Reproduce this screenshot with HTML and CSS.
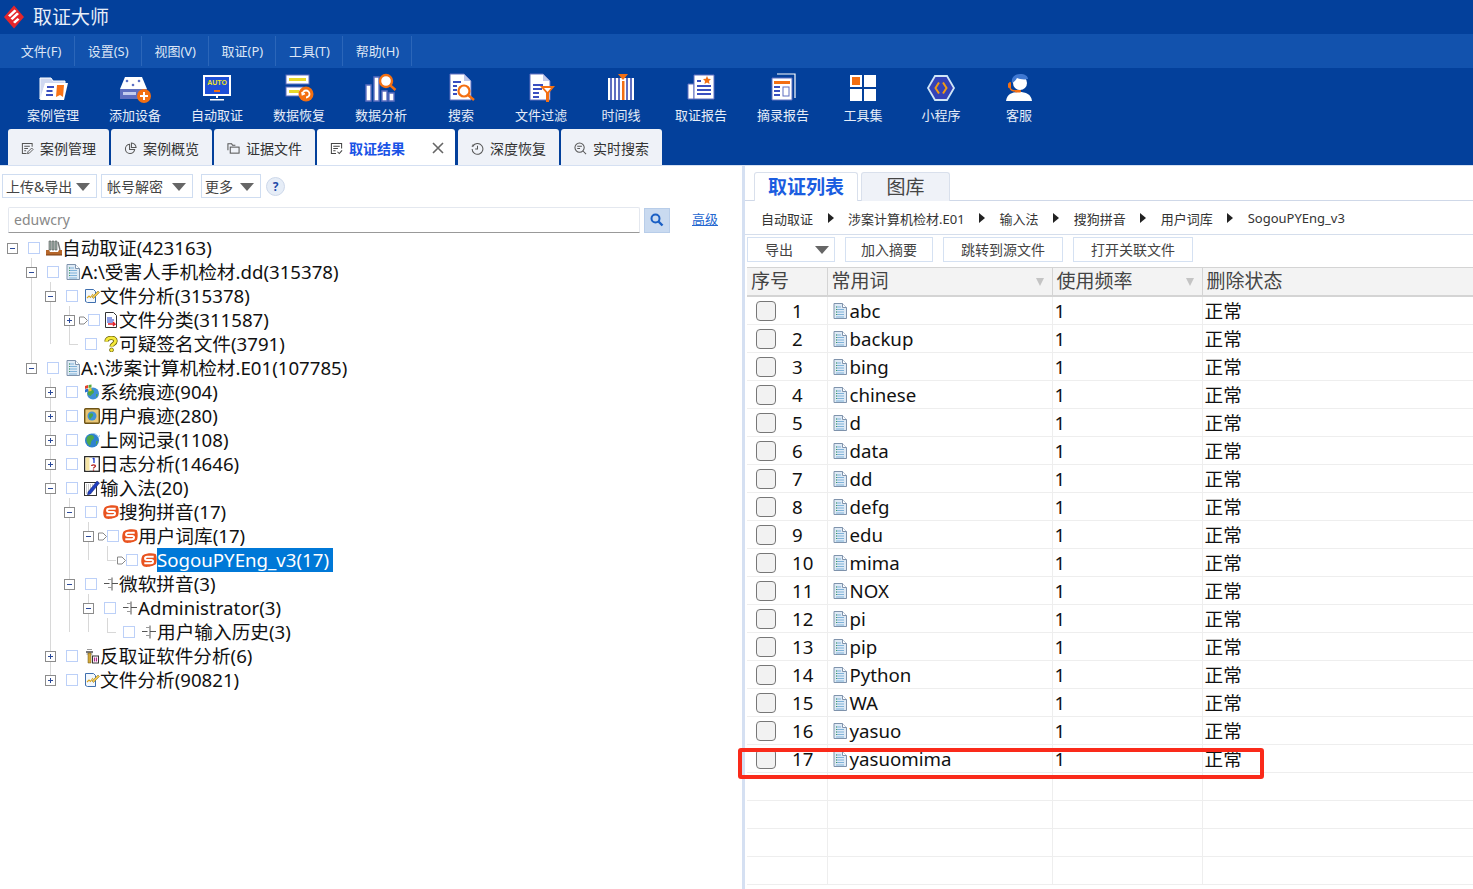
FILE: index.html
```html
<!DOCTYPE html>
<html lang="zh-CN">
<head>
<meta charset="utf-8">
<title>取证大师</title>
<link rel="stylesheet" href="styles.css">
</head>
<body>
<svg class="defs" width="0" height="0" aria-hidden="true">
  <defs>
    <symbol id="t-doc" viewBox="0 0 14 16"><path d="M1 .5h8.500l4 4v11H1z" fill="#dfeaf5" stroke="#7f93ac"/><path d="M9.500.5v4h4" fill="#fff" stroke="#7f93ac"/><path d="M3 4h5M3 6.500h8M3 9h8M3 11.500h8M3 14h8" stroke="#7fb2d9"/><path d="M3 4h1M3 6.500h1M3 9h1M3 11.500h1" stroke="#3f9a5a"/></symbol>
    <symbol id="t-box" viewBox="0 0 16 16"><path d="M3 1h2v9H3zM6 1h2v9H6zM9 1h2v9H9z" fill="#9fb0a8" stroke="#555" stroke-width=".6"/><path d="M12 2l2 8" stroke="#777" stroke-width="1.400"/><path d="M0 10h3l1 2h8l1-2h3v5H0z" fill="#b5662a"/><path d="M0 15h16" stroke="#7a3d12"/></symbol>
    <symbol id="t-analysis" viewBox="0 0 16 16"><path d="M1.500 1.500h8l2 2v11h-8l-2-1z" fill="#f3f8fd" stroke="#3f6fae"/><path d="M3 10l2-2 1.500 1.500L9 6" fill="none" stroke="#d9a520" stroke-width="1.100"/><path d="M8 9l6-6 1.500 1.500-6 6z" fill="#f2c64a" stroke="#7a6a20" stroke-width=".5"/></symbol>
    <symbol id="t-class" viewBox="0 0 16 16"><path d="M2.500.5h8l3 3v12h-11z" fill="#fff" stroke="#333"/><path d="M4 6h5M4 8h7M4 10h6" stroke="#1d3fd0" stroke-width="1.200"/><path d="M5 12h7l-2-2M12 12l-2 2" fill="none" stroke="#e2202a" stroke-width="1.300"/></symbol>
    <symbol id="t-q" viewBox="0 0 16 16"><path d="M3.500 5.500C3.500 1 12.500 .5 12.500 5c0 3-4 3-4 5.500" fill="none" stroke="#6d6410" stroke-width="4.400"/><path d="M3.500 5.500C3.500 1 12.500 .5 12.500 5c0 3-4 3-4 5.500" fill="none" stroke="#f6ea3a" stroke-width="2.800"/><circle cx="8.500" cy="14" r="2" fill="#f6ea3a" stroke="#6d6410" stroke-width=".8"/></symbol>
    <symbol id="t-sys" viewBox="0 0 16 16"><circle cx="9" cy="9.500" r="6" fill="#3f8fd6"/><path d="M6 6c2-1 4 0 4 2s-3 2-3 4l-3-1c-1-2 0-4 2-5zM12 10l2 .5-2 3z" fill="#4ca64a"/><path d="M1 2l3-1v3l-3 1z" fill="#e2402a"/><path d="M4.500 1l3-.5v3l-3 .5z" fill="#5aa83a"/><path d="M1 5.500l3-1v3l-3 1z" fill="#2a6fd0"/><path d="M4.500 4.500l3-.5v3l-3 .5z" fill="#f2c32a"/></symbol>
    <symbol id="t-user" viewBox="0 0 16 16"><rect x=".7" y=".7" width="14.600" height="14.600" rx="1" fill="#e8c676" stroke="#6d5316" stroke-width="1.400"/><circle cx="8" cy="8" r="4.500" fill="#3f92d8"/><path d="M5.500 6c2-1.500 4-.5 3.500 1.500S7 9 6.500 11C5 10 4.500 8 5.500 6z" fill="#4ba548"/></symbol>
    <symbol id="t-net" viewBox="0 0 16 16"><circle cx="8" cy="8.500" r="7" fill="#2e82cf"/><path d="M4 4c3-2 6-1 6 1.500S7 8 7 11l-1 3C3 12 1 7 4 4zM12 9l2 .5-2 4z" fill="#4fa84a"/><path d="M9 1.500c3 0 5 2 5.500 4L16 3" fill="none" stroke="#9cc9ee"/></symbol>
    <symbol id="t-log" viewBox="0 0 16 16"><rect x=".7" y=".7" width="14.600" height="14.600" fill="#fff" stroke="#222" stroke-width="1.300"/><path d="M1.500 1.500h4v13h-4z" fill="#f6e5a6"/><path d="M10 2v5M8.700 3l1.300-1" stroke="#1d3fd0" stroke-width="1.300" fill="none"/><path d="M7.500 10c0-1.500 4-1.500 4 0 0 1-2 1-2 2.500" stroke="#b32020" stroke-width="1.300" fill="none"/><path d="M9.500 13.500v1.200" stroke="#b32020" stroke-width="1.300"/></symbol>
    <symbol id="t-ime" viewBox="0 0 16 16"><rect x=".5" y="2.500" width="12" height="13" fill="#fff" stroke="#333"/><path d="M2 5h8M2 7h6M2 9h5M2 11h4M2 13h6" stroke="#999" stroke-dasharray="1 1"/><path d="M4 12l9-11 2.500 2-9 11-3 1z" fill="#1f3fbf" stroke="#10206a" stroke-width=".5"/></symbol>
    <symbol id="t-sogou" viewBox="0 0 17 16"><path d="M2 3C6 .5 12 .5 15.500 1.500c1.500 2 1.500 8 .5 10.500-2 2.500-9 4-13 3C1 14 0 11 .3 8 .5 6 1 4 2 3z" fill="#e9531f"/><path d="M13.500 4.500H6.500C3.500 4.500 3.500 8 6.500 8h4.500c2.500 0 2.500 3.500-.5 3.500H3.500" fill="none" stroke="#fff" stroke-width="2"/></symbol>
    <symbol id="t-split" viewBox="0 0 16 16"><path d="M1 7.500h5.500M9 7.500h6M9 1.500v13" fill="none" stroke="#555"/><path d="M5 3.500h4M5 11.500h4" stroke="#999"/></symbol>
    <symbol id="t-anti" viewBox="0 0 16 16"><path d="M2 3h7v2H2z" fill="#777"/><path d="M3 1.500h5M2.500 6h6" stroke="#999"/><path d="M4 5h3v10H4z" fill="#d3a93a" stroke="#6a5215" stroke-width=".5"/><rect x="8.500" y="8" width="6" height="7" fill="#fff" stroke="#333"/><path d="M10.500 9.500v4M12.500 9.500v4" stroke="#b12a8a" stroke-width="1.200"/></symbol>
    <symbol id="t-plus" viewBox="0 0 11 11"><rect x=".5" y=".5" width="10" height="10" fill="#fff" stroke="#8c8c8c"/><path d="M3 5.500h5M5.500 3v5" stroke="#2c4a9a"/></symbol>
    <symbol id="t-minus" viewBox="0 0 11 11"><rect x=".5" y=".5" width="10" height="10" fill="#fff" stroke="#8c8c8c"/><path d="M3 5.500h5" stroke="#2c4a9a"/></symbol>
    <symbol id="t-arrow" viewBox="0 0 9 9"><path d="M.5 1h4.500l3.500 3.500L5 8H.5z" fill="#fff" stroke="#888"/></symbol>
    <symbol id="t-search" viewBox="0 0 14 14"><circle cx="5.500" cy="5.500" r="4" fill="none" stroke="#1a5fc4" stroke-width="2"/><path d="M8.500 8.500l4 4" stroke="#1a5fc4" stroke-width="2.400"/></symbol>

    <symbol id="b-edit" viewBox="0 0 14 14"><path d="M12 5V1.500H1.500v11H6M3.500 4.500h6M3.500 7h4M3.500 9.500h2" fill="none" stroke="#555" stroke-width="1.100"/><path d="M7 12.500l.5-2 4-4 1.500 1.500-4 4z" fill="none" stroke="#555"/></symbol>
    <symbol id="b-pie" viewBox="0 0 14 14"><path d="M6 2.500a5 5 0 1 0 5.500 5.500H6z" fill="none" stroke="#555" stroke-width="1.100"/><path d="M8 1a5 5 0 0 1 5 5H8z" fill="none" stroke="#555" stroke-width="1.100"/></symbol>
    <symbol id="b-folder" viewBox="0 0 14 14"><path d="M1 9V2h4l1 1.500h3" fill="none" stroke="#555" stroke-width="1.100"/><rect x="3.500" y="5.500" width="9.500" height="6.500" fill="none" stroke="#555" stroke-width="1.100"/></symbol>
    <symbol id="b-result" viewBox="0 0 14 14"><path d="M6.500 12.500h-5v-11h11V7M3.500 4.500h7M3.500 7h5M3.500 9.500h2.500" fill="none" stroke="#444" stroke-width="1.100"/><path d="M8 10.500l2 2 3-3.500" fill="none" stroke="#444" stroke-width="1.100"/></symbol>
    <symbol id="b-clock" viewBox="0 0 14 14"><path d="M2 4.500a5.800 5.800 0 1 1-.8 3" fill="none" stroke="#555" stroke-width="1.100"/><path d="M7 4v3.500H4.500M.8 4.500l1.200 0 .3-2" fill="none" stroke="#555" stroke-width="1.100"/></symbol>
    <symbol id="b-find" viewBox="0 0 14 14"><circle cx="6" cy="6" r="5" fill="none" stroke="#555" stroke-width="1.100"/><path d="M9.700 9.700l3.300 3.300M3.500 4.500h5M3.500 7h3" stroke="#555" stroke-width="1.100"/></symbol>
  </defs>
</svg>

<header class="titlebar">
  <svg class="logo" viewBox="0 0 20 24" aria-hidden="true">
    <path d="M10 .5L20 12 10 23.500 0 12z" fill="#e5262b"/>
    <path d="M4 10.500l6.500-6 2 1.500-6.500 6zM6.500 13.500l6.500-6 2 1.500-6.500 6zM9 17l4.500-4 2 1.500-4.500 4z" fill="#fff"/>
  </svg>
  <span class="app-name">取证大师</span>
</header>

<nav class="menubar">
  <span class="menu-item">文件(F)</span>
  <span class="menu-item">设置(S)</span>
  <span class="menu-item">视图(V)</span>
  <span class="menu-item">取证(P)</span>
  <span class="menu-item">工具(T)</span>
  <span class="menu-item">帮助(H)</span>
</nav>

<section class="toolbar">
  <div class="tool">
    <svg class="tool-icon" viewBox="0 0 32 32" aria-hidden="true"><path d="M3 27V6h11l2 3h12v5H8z" fill="#cfd8f0" stroke="#fff"/><path d="M8 11h23l-4 17H3z" fill="#fff"/><path d="M10 15h7M9.500 19h6M9 23h7" stroke="#3a4fc0" stroke-width="2.200"/><path d="M20 13h7l-1 12-3-2-4 2z" fill="#f97316"/></svg>
    <span class="tool-label">案例管理</span>
  </div>
  <div class="tool">
    <svg class="tool-icon" viewBox="0 0 32 32" aria-hidden="true"><path d="M6 5h17l5 12H1z" fill="#fff"/><circle cx="8" cy="9" r="1.300" fill="#5b6fc4"/><circle cx="20" cy="9" r="1.300" fill="#5b6fc4"/><circle cx="14" cy="13" r="1.300" fill="#5b6fc4"/><rect x="1" y="17" width="27" height="10" fill="#5f6fc0"/><rect x="4" y="20" width="13" height="3" fill="#c5cdee"/><circle cx="25" cy="24" r="7" fill="#f36f12"/><path d="M21 24h8M25 20v8" stroke="#fff" stroke-width="2"/></svg>
    <span class="tool-label">添加设备</span>
  </div>
  <div class="tool">
    <svg class="tool-icon" viewBox="0 0 32 32" aria-hidden="true"><rect x="2" y="3" width="28" height="21" fill="#fff"/><rect x="4" y="5" width="24" height="17" fill="#1e4fd6"/><text class="auto-text" x="16" y="13">AUTO</text><rect x="13" y="18" width="6" height="2" fill="#f36f12"/><path d="M15 24h2v2h-2zM9 27h14v1.500H9z" fill="#fff"/></svg>
    <span class="tool-label">自动取证</span>
  </div>
  <div class="tool">
    <svg class="tool-icon" viewBox="0 0 32 32" aria-hidden="true"><rect x="3" y="3" width="23" height="9" fill="#fff" stroke="#5f6fc0"/><rect x="6" y="6" width="17" height="3" fill="#e8d92a"/><rect x="3" y="15" width="17" height="9" fill="#fff" stroke="#5f6fc0"/><rect x="6" y="18" width="10" height="3" fill="#e8d92a"/><circle cx="23" cy="22" r="7.500" fill="#f36f12"/><path d="M19.500 22a3.500 3.500 0 1 1 3.500 3.500M19 20l.500 2.500 2.500-1" fill="none" stroke="#fff" stroke-width="1.800"/></svg>
    <span class="tool-label">数据恢复</span>
  </div>
  <div class="tool">
    <svg class="tool-icon" viewBox="0 0 32 32" aria-hidden="true"><path d="M1 13h5v16H1zM9 5h5v24H9zM17 19h5v10h-5zM24 21h5v8h-5z" fill="#fff" stroke="#5f6fc0" stroke-width="1.400"/><circle cx="21" cy="9" r="6" fill="#fff" stroke="#f36f12" stroke-width="2.400"/><path d="M25.500 13.500l5 4.500" stroke="#f36f12" stroke-width="2.400"/></svg>
    <span class="tool-label">数据分析</span>
  </div>
  <div class="tool n">
    <svg class="tool-icon" viewBox="0 0 32 32" aria-hidden="true"><path d="M5 2h14l7 7v19H5z" fill="#fff" stroke="#5f6fc0"/><path d="M19 2l7 7h-7z" fill="#bfc7e8"/><path d="M8 10h8M8 14h4M8 18h4M8 22h4" stroke="#3a4fc0" stroke-width="1.800"/><circle cx="19" cy="19" r="5.500" fill="#fff" stroke="#f36f12" stroke-width="2.200"/><path d="M23 23l6 5" stroke="#f36f12" stroke-width="2.400"/></svg>
    <span class="tool-label">搜索</span>
  </div>
  <div class="tool">
    <svg class="tool-icon" viewBox="0 0 32 32" aria-hidden="true"><path d="M5 2h13l7 7v19H5z" fill="#fff" stroke="#5f6fc0"/><path d="M18 2l7 7h-7z" fill="#bfc7e8"/><path d="M8 13h10M8 17h9M8 21h6M8 25h6" stroke="#3a4fc0" stroke-width="1.800"/><path d="M15 14h15l-6 7v9h-3v-9z" fill="#f36f12"/><path d="M19 16h7l-3.500 4z" fill="#fff"/></svg>
    <span class="tool-label">文件过滤</span>
  </div>
  <div class="tool n">
    <svg class="tool-icon" viewBox="0 0 32 32" aria-hidden="true"><path d="M3 6h26v22H3z" fill="#fff"/><path d="M6 6v22M10 6v22M14 6v22M22 6v22M26 6v22" stroke="#5f6fc0" stroke-width="2"/><path d="M17 9h2.500v19H17z" fill="#f36f12"/><path d="M13 2h10l-5 6z" fill="#f36f12"/></svg>
    <span class="tool-label">时间线</span>
  </div>
  <div class="tool">
    <svg class="tool-icon" viewBox="0 0 32 32" aria-hidden="true"><path d="M3 12h6v15H3z" fill="#fff" stroke="#5f6fc0"/><path d="M9 3h20v24H9z" fill="#fff" stroke="#5f6fc0"/><path d="M12 9h4M12 14h14M12 18h14M12 22h14" stroke="#3a4fc0" stroke-width="1.800"/><path d="M22 4l1.200 2.700 2.800.3-2 2 .5 3-2.500-1.500-2.500 1.500.5-3-2-2 2.800-.3z" fill="#f36f12"/></svg>
    <span class="tool-label">取证报告</span>
  </div>
  <div class="tool">
    <svg class="tool-icon" viewBox="0 0 32 32" aria-hidden="true"><path d="M10 2h18v24" fill="none" stroke="#fff" stroke-width="1.200"/><path d="M5 6h20v22H5z" fill="#fff" stroke="#5f6fc0"/><rect x="7" y="9" width="16" height="3" fill="#f36f12"/><path d="M7 15h6M7 19h6M7 23h6" stroke="#3a4fc0" stroke-width="1.800"/><rect x="16" y="15" width="6" height="9" fill="#fff" stroke="#5f6fc0"/></svg>
    <span class="tool-label">摘录报告</span>
  </div>
  <div class="tool n">
    <svg class="tool-icon" viewBox="0 0 32 32" aria-hidden="true"><rect x="3" y="3" width="12" height="12" fill="#fff"/><rect x="5" y="5" width="8" height="8" fill="#f36f12"/><rect x="17" y="3" width="12" height="12" fill="#fff"/><rect x="3" y="17" width="12" height="12" fill="#fff"/><rect x="17" y="17" width="12" height="12" fill="#fff"/></svg>
    <span class="tool-label">工具集</span>
  </div>
  <div class="tool n">
    <svg class="tool-icon" viewBox="0 0 32 32" aria-hidden="true"><path d="M10 4h12l7 12-7 12H10L3 16z" fill="#3443b8" stroke="#cfe6f7" stroke-width="1.800"/><path d="M14 10.500l-3.500 5.500 3.500 5.500M18 10.500l3.500 5.500-3.500 5.500" fill="none" stroke="#f39a12" stroke-width="2"/></svg>
    <span class="tool-label">小程序</span>
  </div>
  <div class="tool n">
    <svg class="tool-icon" viewBox="0 0 32 32" aria-hidden="true"><path d="M3 29c1-7 6-9 13-9s12 2 13 9z" fill="#fff"/><circle cx="17" cy="11" r="7" fill="#fff"/><path d="M9 11c-1-6 3-9 8-9s8 2 8 5c-4 1-9 0-11-1-1 2-3 4-5 5z" fill="#3f78d2"/><path d="M7 10v5c0 3 3 4 6 4" fill="none" stroke="#f36f12" stroke-width="1.500"/><rect x="5" y="11" width="3" height="5" rx="1" fill="#f36f12"/><rect x="12" y="18" width="6" height="2.500" rx="1" fill="#f36f12"/></svg>
    <span class="tool-label">客服</span>
  </div>
</section>

<section class="tabs">
  <div class="tab"><svg class="tab-icon"><use href="#b-edit"/></svg>案例管理</div>
  <div class="tab"><svg class="tab-icon"><use href="#b-pie"/></svg>案例概览</div>
  <div class="tab"><svg class="tab-icon"><use href="#b-folder"/></svg>证据文件</div>
  <div class="tab active"><svg class="tab-icon"><use href="#b-result"/></svg><span class="tab-title">取证结果</span>
    <svg class="tab-close" viewBox="0 0 12 12" aria-hidden="true"><path d="M1 1l10 10M11 1L1 11" stroke="#666" stroke-width="1.600"/></svg>
  </div>
  <div class="tab"><svg class="tab-icon"><use href="#b-clock"/></svg>深度恢复</div>
  <div class="tab"><svg class="tab-icon"><use href="#b-find"/></svg>实时搜索</div>
</section>

<main class="workspace">
  <aside class="left">
    <div class="left-tools">
      <span class="btn b-upload">上传&amp;导出<i class="caret"></i></span>
      <span class="btn b-account">帐号解密<i class="caret"></i></span>
      <span class="btn b-more">更多<i class="caret"></i></span>
      <span class="help">?</span>
    </div>
    <div class="search-row">
      <div class="search-input">eduwcry</div>
      <span class="search-btn"><svg class="search-glyph"><use href="#t-search"/></svg></span>
      <a class="advanced">高级</a>
    </div>
    <div class="tree">
      <div class="row l0"><svg class="exp"><use href="#t-minus"/></svg><span class="gutter"></span><span class="cb"></span><svg class="ico"><use href="#t-box"/></svg><span class="label">自动取证(423163)</span></div>
      <div class="branch g1">
        <div class="row l1"><svg class="exp"><use href="#t-minus"/></svg><span class="gutter"></span><span class="cb"></span><svg class="ico"><use href="#t-doc"/></svg><span class="label">A:\受害人手机检材.dd(315378)</span></div>
        <div class="branch g2">
          <div class="row l2"><svg class="exp"><use href="#t-minus"/></svg><span class="gutter"></span><span class="cb"></span><svg class="ico"><use href="#t-analysis"/></svg><span class="label">文件分析(315378)</span></div>
          <div class="branch g3">
            <div class="row l3 arrowed"><svg class="exp"><use href="#t-plus"/></svg><span class="gutter"><svg class="arrow"><use href="#t-arrow"/></svg></span><span class="cb"></span><svg class="ico"><use href="#t-class"/></svg><span class="label">文件分类(311587)</span></div>
            <div class="row l3"><span class="elbow"></span><span class="gutter"></span><span class="cb"></span><svg class="ico"><use href="#t-q"/></svg><span class="label">可疑签名文件(3791)</span></div>
          </div>
        </div>
        <div class="row l1"><svg class="exp"><use href="#t-minus"/></svg><span class="gutter"></span><span class="cb"></span><svg class="ico"><use href="#t-doc"/></svg><span class="label">A:\涉案计算机检材.E01(107785)</span></div>
      </div>
      <div class="branch g2">
        <div class="row l2"><svg class="exp"><use href="#t-plus"/></svg><span class="gutter"></span><span class="cb"></span><svg class="ico"><use href="#t-sys"/></svg><span class="label">系统痕迹(904)</span></div>
        <div class="row l2"><svg class="exp"><use href="#t-plus"/></svg><span class="gutter"></span><span class="cb"></span><svg class="ico"><use href="#t-user"/></svg><span class="label">用户痕迹(280)</span></div>
        <div class="row l2"><svg class="exp"><use href="#t-plus"/></svg><span class="gutter"></span><span class="cb"></span><svg class="ico"><use href="#t-net"/></svg><span class="label">上网记录(1108)</span></div>
        <div class="row l2"><svg class="exp"><use href="#t-plus"/></svg><span class="gutter"></span><span class="cb"></span><svg class="ico"><use href="#t-log"/></svg><span class="label">日志分析(14646)</span></div>
        <div class="row l2"><svg class="exp"><use href="#t-minus"/></svg><span class="gutter"></span><span class="cb"></span><svg class="ico"><use href="#t-ime"/></svg><span class="label">输入法(20)</span></div>
        <div class="branch g3">
          <div class="row l3"><svg class="exp"><use href="#t-minus"/></svg><span class="gutter"></span><span class="cb"></span><svg class="ico"><use href="#t-sogou"/></svg><span class="label">搜狗拼音(17)</span></div>
          <div class="branch g4">
            <div class="row l4 arrowed"><svg class="exp"><use href="#t-minus"/></svg><span class="gutter"><svg class="arrow"><use href="#t-arrow"/></svg></span><span class="cb"></span><svg class="ico"><use href="#t-sogou"/></svg><span class="label">用户词库(17)</span></div>
            <div class="branch g5">
              <div class="row l5 arrowed"><span class="elbow"></span><span class="gutter"><svg class="arrow"><use href="#t-arrow"/></svg></span><span class="cb"></span><svg class="ico"><use href="#t-sogou"/></svg><span class="label selected">SogouPYEng_v3(17)</span></div>
            </div>
          </div>
          <div class="row l3"><svg class="exp"><use href="#t-minus"/></svg><span class="gutter"></span><span class="cb"></span><svg class="ico"><use href="#t-split"/></svg><span class="label">微软拼音(3)</span></div>
          <div class="branch g4">
            <div class="row l4"><svg class="exp"><use href="#t-minus"/></svg><span class="gutter"></span><span class="cb"></span><svg class="ico"><use href="#t-split"/></svg><span class="label">Administrator(3)</span></div>
            <div class="branch g5">
              <div class="row l5"><span class="elbow"></span><span class="gutter"></span><span class="cb"></span><svg class="ico"><use href="#t-split"/></svg><span class="label">用户输入历史(3)</span></div>
            </div>
          </div>
        </div>
        <div class="row l2"><svg class="exp"><use href="#t-plus"/></svg><span class="gutter"></span><span class="cb"></span><svg class="ico"><use href="#t-anti"/></svg><span class="label">反取证软件分析(6)</span></div>
        <div class="row l2"><svg class="exp"><use href="#t-plus"/></svg><span class="gutter"></span><span class="cb"></span><svg class="ico"><use href="#t-analysis"/></svg><span class="label">文件分析(90821)</span></div>
      </div>
    </div>
  </aside>

  <section class="right">
    <div class="subtabs">
      <span class="subtab on">取证列表</span>
      <span class="subtab off">图库</span>
    </div>
    <div class="crumbs">
      <span>自动取证</span><i class="crumb-sep"></i>
      <span>涉案计算机检材.E01</span><i class="crumb-sep"></i>
      <span>输入法</span><i class="crumb-sep"></i>
      <span>搜狗拼音</span><i class="crumb-sep"></i>
      <span>用户词库</span><i class="crumb-sep"></i>
      <span>SogouPYEng_v3</span>
    </div>
    <div class="actions">
      <span class="act a-export">导出<i class="caret"></i></span>
      <span class="act a-add">加入摘要</span>
      <span class="act a-jump">跳转到源文件</span>
      <span class="act a-open">打开关联文件</span>
    </div>
    <table class="grid">
      <colgroup><col class="c-no"><col class="c-word"><col class="c-freq"><col class="c-state"></colgroup>
      <thead>
        <tr><th>序号</th><th>常用词<i class="funnel"></i></th><th>使用频率<i class="funnel"></i></th><th>删除状态</th></tr>
      </thead>
      <tbody>
        <tr><td><span class="no"><i class="box"></i>1</span></td><td><span class="word"><svg class="fdoc"><use href="#t-doc"/></svg>abc</span></td><td>1</td><td>正常</td></tr>
        <tr><td><span class="no"><i class="box"></i>2</span></td><td><span class="word"><svg class="fdoc"><use href="#t-doc"/></svg>backup</span></td><td>1</td><td>正常</td></tr>
        <tr><td><span class="no"><i class="box"></i>3</span></td><td><span class="word"><svg class="fdoc"><use href="#t-doc"/></svg>bing</span></td><td>1</td><td>正常</td></tr>
        <tr><td><span class="no"><i class="box"></i>4</span></td><td><span class="word"><svg class="fdoc"><use href="#t-doc"/></svg>chinese</span></td><td>1</td><td>正常</td></tr>
        <tr><td><span class="no"><i class="box"></i>5</span></td><td><span class="word"><svg class="fdoc"><use href="#t-doc"/></svg>d</span></td><td>1</td><td>正常</td></tr>
        <tr><td><span class="no"><i class="box"></i>6</span></td><td><span class="word"><svg class="fdoc"><use href="#t-doc"/></svg>data</span></td><td>1</td><td>正常</td></tr>
        <tr><td><span class="no"><i class="box"></i>7</span></td><td><span class="word"><svg class="fdoc"><use href="#t-doc"/></svg>dd</span></td><td>1</td><td>正常</td></tr>
        <tr><td><span class="no"><i class="box"></i>8</span></td><td><span class="word"><svg class="fdoc"><use href="#t-doc"/></svg>defg</span></td><td>1</td><td>正常</td></tr>
        <tr><td><span class="no"><i class="box"></i>9</span></td><td><span class="word"><svg class="fdoc"><use href="#t-doc"/></svg>edu</span></td><td>1</td><td>正常</td></tr>
        <tr><td><span class="no"><i class="box"></i>10</span></td><td><span class="word"><svg class="fdoc"><use href="#t-doc"/></svg>mima</span></td><td>1</td><td>正常</td></tr>
        <tr><td><span class="no"><i class="box"></i>11</span></td><td><span class="word"><svg class="fdoc"><use href="#t-doc"/></svg>NOX</span></td><td>1</td><td>正常</td></tr>
        <tr><td><span class="no"><i class="box"></i>12</span></td><td><span class="word"><svg class="fdoc"><use href="#t-doc"/></svg>pi</span></td><td>1</td><td>正常</td></tr>
        <tr><td><span class="no"><i class="box"></i>13</span></td><td><span class="word"><svg class="fdoc"><use href="#t-doc"/></svg>pip</span></td><td>1</td><td>正常</td></tr>
        <tr><td><span class="no"><i class="box"></i>14</span></td><td><span class="word"><svg class="fdoc"><use href="#t-doc"/></svg>Python</span></td><td>1</td><td>正常</td></tr>
        <tr><td><span class="no"><i class="box"></i>15</span></td><td><span class="word"><svg class="fdoc"><use href="#t-doc"/></svg>WA</span></td><td>1</td><td>正常</td></tr>
        <tr><td><span class="no"><i class="box"></i>16</span></td><td><span class="word"><svg class="fdoc"><use href="#t-doc"/></svg>yasuo</span></td><td>1</td><td>正常</td></tr>
        <tr><td><span class="no"><i class="box"></i>17</span></td><td><span class="word"><svg class="fdoc"><use href="#t-doc"/></svg>yasuomima</span></td><td>1</td><td>正常</td></tr>
        <tr><td></td><td></td><td></td><td></td></tr>
        <tr><td></td><td></td><td></td><td></td></tr>
        <tr><td></td><td></td><td></td><td></td></tr>
        <tr><td></td><td></td><td></td><td></td></tr>
      </tbody>
    </table>
    <div class="annotation"></div>
  </section>
</main>
</body>
</html>
```

FILE: styles.css
```css
* { box-sizing: border-box; }
html, body { margin: 0; height: 889px; overflow: hidden; }
body {
  background: #fff;
  color: #111;
  font-family: "Noto Sans", "Noto Sans CJK SC", sans-serif;
  display: flex;
  flex-direction: column;
}
i { font-style: normal; }
.defs { position: absolute; }

/* title */
.titlebar { height: 34px; background: #03409b; display: flex; align-items: center; padding-left: 4px; flex: none; }
.logo { width: 20px; height: 24px; margin-right: 9px; }
.app-name { color: #e8eef8; font-size: 19px; line-height: 34px; }

/* menu */
.menubar { height: 34px; background: #1252ad; display: flex; padding: 2px 0 2px 8px; flex: none; }
.menu-item { width: 67.1px; text-align: center; color: #dde6f5; font-size: 13px; line-height: 30px; border-right: 1px solid #2b66b9; white-space: nowrap; }
.menu-item:last-child { width: 69px; }

/* ribbon */
.toolbar { height: 61px; background: #03409b; display: flex; padding: 4px 0 0 12px; flex: none; }
.tool { width: 82px; display: flex; flex-direction: column; align-items: center; }
.tool.n { width: 78px; }
.tool-icon { width: 32px; height: 32px; }
.tool-label { color: #e6edf8; font-size: 13px; line-height: 16px; margin-top: 3px; }
.auto-text { fill: #f2e41f; font-family: "Liberation Sans", sans-serif; font-size: 7px; font-weight: 700; text-anchor: middle; }

/* tabs */
.tabs { height: 37px; background: #03409b; display: flex; gap: 2px; padding-left: 8px; border-bottom: 1px solid #d5e0f2; flex: none; }
.tab {
  width: 101px; height: 36px; background: #eff2f8; color: #333; font-size: 14px;
  display: flex; align-items: center; padding: 2px 0 0 13px; border-radius: 3px 3px 0 0;
}
.tab-icon { width: 13px; height: 13px; margin-right: 6px; flex: none; }
.tab.active { width: 138px; background: #fff; margin-right: 1px; position: relative; }
.tab-title { color: #1a53e6; font-weight: 700; }
.tab-close { width: 12px; height: 12px; margin-left: 27px; }

/* workspace */
.workspace { flex: 1; display: flex; min-height: 0; }
.left { width: 742px; flex: none; }
.right { flex: 1; border-left: 3px solid #d5e0f2; position: relative; min-width: 0; }

.left-tools { display: flex; align-items: center; height: 24px; margin: 8px 0 0 2px; }
.btn {
  height: 24px; border: 1px solid #cfddf1; color: #444; font-size: 14px; line-height: 22px;
  padding: 1px 6px 0 3px; display: flex; align-items: center; justify-content: space-between;
}
.b-upload { width: 95px; margin-right: 4px; }
.b-account { width: 92px; margin-right: 8px; padding-left: 5px; }
.b-more { width: 60px; margin-right: 5px; }
.caret { width: 0; height: 0; border-left: 7px solid transparent; border-right: 7px solid transparent; border-top: 8px solid #666; display: block; }
.help {
  width: 19px; height: 19px; border-radius: 50%; background: #e6edf7; border: 1px solid #cdd8ea;
  color: #1f4aa8; font-size: 12px; font-weight: 700; line-height: 17px; text-align: center;
}

.search-row { display: flex; align-items: center; height: 26px; margin: 9px 0 0 8px; }
.search-input {
  width: 632px; height: 26px; border: 1px solid #e4e8ef; border-bottom: 1px solid #999;
  color: #888; font-size: 14px; line-height: 24px; padding-left: 5px; margin-right: 4px; border-radius: 2px 2px 0 0;
}
.search-btn { width: 26px; height: 25px; background: #c9daf0; border: 1px solid #b8cde9; display: flex; align-items: center; justify-content: center; }
.search-glyph { width: 14px; height: 14px; }
.advanced { color: #2467d0; font-size: 13px; line-height: 24px; height: 24px; text-decoration: underline; margin: -2px 0 0 22px; }

/* tree */
.tree { margin-top: 3px; }
.branch { position: relative; }
.branch::before { content: ""; position: absolute; top: -2px; bottom: 12px; width: 1px; background: #d8d8d8; }
.g1::before { left: 31px; }
.g2::before { left: 50px; }
.g3::before { left: 69px; }
.g4::before { left: 88px; }
.g5::before { left: 107px; }
.row { height: 24px; display: flex; align-items: center; position: relative; white-space: nowrap; }
.l0 { padding-left: 7px; }
.l1 { padding-left: 26px; }
.l2 { padding-left: 45px; }
.l3 { padding-left: 64px; }
.l4 { padding-left: 83px; }
.l5 { padding-left: 102px; }
.exp { width: 11px; height: 11px; flex: none; position: relative; margin-right: 4px; }
.elbow { width: 15px; height: 1px; flex: none; background: linear-gradient(to right, transparent 5px, #d8d8d8 5px, #d8d8d8 14px, transparent 14px); }
.gutter { width: 6px; flex: none; display: flex; }
.arrowed .gutter { width: 9px; }
.arrow { width: 9px; height: 9px; }
.cb { width: 12px; height: 12px; border: 1px solid #bcd0f8; background: #fff; flex: none; margin-right: 6px; }
.arrowed .cb { margin-right: 3px; }
.ico { width: 16px; height: 16px; flex: none; }
.label { font-size: 18.67px; line-height: 24px; color: #111; }
.selected { background: #0078d7; color: #fff; padding-right: 4px; }

/* right */
.subtabs { height: 35px; padding: 6px 0 0 9px; display: flex; gap: 3px; border-bottom: 1px solid #cfd8e8; }
.subtab { height: 29px; font-size: 19px; line-height: 29px; text-align: center; border: 1px solid #d9e0ec; border-bottom: 0; border-radius: 3px 3px 0 0; }
.subtab.on { width: 104px; color: #1b5de0; font-weight: 700; background: #fff; }
.subtab.off { width: 89px; color: #444; background: #eff2f8; }
.crumbs { height: 34px; display: flex; align-items: center; gap: 14.5px; padding: 1px 0 0 16px; color: #333; font-size: 13px; border-bottom: 1px solid #d5deec; }
.crumb-sep { width: 0; height: 0; border-left: 6px solid #222; border-top: 5px solid transparent; border-bottom: 5px solid transparent; display: block; }
.actions { height: 32px; display: flex; padding: 2px 0 0 2px; }
.act { height: 25px; border: 1px solid #d5e1f2; color: #444; font-size: 14px; line-height: 23px; text-align: center; margin-right: 10px; }
.a-export { width: 88px; display: flex; align-items: center; justify-content: space-between; padding: 0 5px 0 17px; }
.a-add { width: 88px; }
.a-jump, .a-open { width: 120px; }

.grid { border-collapse: collapse; table-layout: fixed; width: 726px; margin-left: 2px; }
.c-no { width: 80px; }
.c-word { width: 225px; }
.c-freq { width: 150px; }
.c-state { width: 271px; }
.grid th {
  height: 28px; background: #f3f3f3; color: #444; font-size: 19px; font-weight: 400; text-align: left;
  padding: 0 0 0 4px; border-top: 1px solid #d4d4d4; border-bottom: 2px solid #d4d4d4; border-right: 1px solid #d4d4d4; position: relative; line-height: 26px;
}
.grid td {
  height: 28px; padding: 0 0 0 2px; font-size: 18.67px; line-height: 27px; color: #111;
  border-bottom: 1px solid #eee; border-right: 1px solid #eee; white-space: nowrap;
}
.grid td:first-child { padding-left: 0; }
.no { display: flex; align-items: center; padding-left: 9px; }
.box { width: 20px; height: 20px; border: 1px solid #777; border-radius: 4px; background: #f2f2f2; margin: 2px 16px 0 0; flex: none; }
.word { display: flex; align-items: center; padding-left: 3px; }
.fdoc { width: 14px; height: 16px; margin: 1px 3px 0 0; flex: none; }
.funnel {
  position: absolute; right: 8px; top: 10px; width: 0; height: 0;
  border-left: 4px solid transparent; border-right: 4px solid transparent; border-top: 8px solid #c4c4c4;
}

.annotation { position: absolute; left: -7px; top: 582px; width: 526px; height: 31px; border: 4px solid #fa2a1a; border-radius: 3px; }
```
